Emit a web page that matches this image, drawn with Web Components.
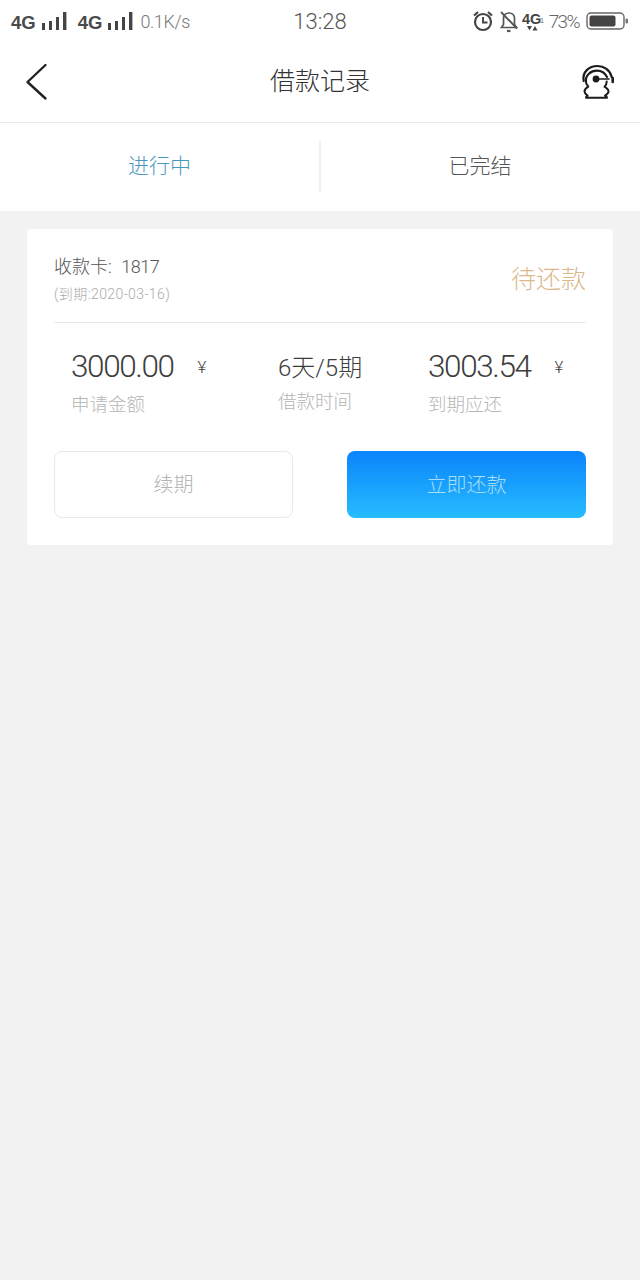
<!DOCTYPE html>
<html lang="zh">
<head>
<meta charset="utf-8">
<title>借款记录</title>
<style>
  html, body { margin: 0; height: 100%; }
  body {
    background: #f2f2f2;
    font-family: Roboto, "Noto Sans CJK SC", sans-serif;
    font-weight: 300;
  }
  #page { display: block; width: 640px; height: 1280px; overflow: hidden; }
</style>
</head>
<body>
<loan-page id="page">
  <status-bar></status-bar>
  <nav-bar title="借款记录"></nav-bar>
  <tab-bar></tab-bar>
  <loan-card card="1817" due="2020-03-16" state="待还款"></loan-card>
</loan-page>

<script>
class LoanPage extends HTMLElement {
  constructor() {
    super();
    this.attachShadow({ mode: "open" });
    this.shadowRoot.innerHTML = `
      <style>
        :host { display: flex; flex-direction: column; background: #f2f2f2; }
      </style>
      <slot></slot>
    `;
  }
}

class StatusBar extends HTMLElement {
  constructor() {
    super();
    this.attachShadow({ mode: "open" });
    const signal = `
      <svg width="26" height="18" viewBox="0 0 26 18">
        <rect x="1" y="11" width="3" height="7" fill="#444"/>
        <rect x="8" y="9" width="3" height="9" fill="#444"/>
        <rect x="15" y="5" width="3" height="13" fill="#444"/>
        <rect x="22" y="0" width="3.4" height="18" fill="#444"/>
      </svg>`;
    this.shadowRoot.innerHTML = `
      <style>
        :host {
          display: grid;
          grid-template-columns: 1fr auto 1fr;
          align-items: center;
          height: 42px;
          background: #fff;
          color: #555;
          font-family: Roboto, sans-serif;
          font-weight: 300;
        }
        .left, .right { display: flex; align-items: center; }
        .left { padding-left: 11px; }
        .right { justify-content: flex-end; padding-right: 11px; }
        .net { font: 700 18.5px "Liberation Sans", sans-serif; color: #4a4a4a; margin-right: 5px; padding-top: 3px; }
        .group { display: flex; align-items: center; margin-right: 11px; }
        .group:nth-child(2) { margin-right: 7px; }
        .speed { font-size: 18px; color: #777; letter-spacing: -0.4px; }
        .time { font-size: 22px; color: #555; }
        .pct { font-size: 19px; color: #666; margin: 0 7px 0 5px; letter-spacing: -1.6px; }
        svg { display: block; }
        .alarm { margin-right: 6px; }
        .bell { margin-right: 3px; }
      </style>
      <div class="left">
        <div class="group"><span class="net">4G</span>${signal}</div>
        <div class="group"><span class="net">4G</span>${signal}</div>
        <span class="speed">0.1K/s</span>
      </div>
      <span class="time">13:28</span>
      <div class="right">
        <svg class="alarm" width="20" height="24" viewBox="0 0 20 24" fill="none" stroke="#444">
          <circle cx="10" cy="13" r="8" stroke-width="2.2"/>
          <path d="M10 8V13.500H14.500" stroke-width="1.900"/>
          <path d="M1 6.500L5 3M19 6.500L15 3" stroke-width="2.200"/>
        </svg>
        <svg class="bell" width="20" height="24" viewBox="0 0 20 24" fill="none" stroke="#555" stroke-width="1.700">
          <path d="M2.500 18.500H17.500L15.500 15.500V9.500C15.500 6 13 4 10 4C7 4 4.500 6 4.500 9.500V15.500Z"/>
          <path d="M2 3L18 19.500" stroke-width="1.900"/>
          <path d="M8 22H11.500" stroke-width="2.200"/>
        </svg>
        <svg width="22" height="24" viewBox="0 0 22 24">
          <text x="0" y="15" font-family="Liberation Sans, sans-serif" font-weight="700" font-size="14.500" fill="#444">4G</text>
          <text x="18" y="14" font-family="Liberation Sans, sans-serif" font-size="7" fill="#666">1</text>
          <path d="M5 17H10L7.500 21.500Z" fill="#444"/>
          <path d="M10.500 21.500H15.500L13 17Z" fill="#444"/>
        </svg>
        <span class="pct">73%</span>
        <svg width="43" height="18" viewBox="0 0 43 18">
          <rect x="1" y="1" width="37" height="16" rx="4" fill="none" stroke="#666" stroke-width="1.400"/>
          <rect x="3.500" y="3.500" width="26" height="11" rx="2" fill="#444"/>
          <rect x="39.500" y="6.500" width="2.500" height="5" rx="1" fill="#777"/>
        </svg>
      </div>
    `;
  }
}

class NavBar extends HTMLElement {
  constructor() {
    super();
    this.attachShadow({ mode: "open" });
    this.shadowRoot.innerHTML = `
      <style>
        :host {
          display: grid;
          grid-template-columns: 1fr auto 1fr;
          align-items: center;
          height: 80px;
          background: #fff;
          border-bottom: 1px solid #e9e9e9;
        }
        .title { font-size: 25px; color: #333; font-family: "Noto Sans CJK SC", sans-serif; font-weight: 300; padding-bottom: 6px; }
        .back { padding-left: 25px; }
        .help { justify-self: end; padding-right: 26px; }
        svg { display: block; }
      </style>
      <div class="back">
        <svg width="24" height="38" viewBox="0 0 24 38" fill="none" stroke="#222" stroke-width="2.400" stroke-linecap="round" stroke-linejoin="round">
          <path d="M20.500 2L2.500 19L20.500 35.500"/>
        </svg>
      </div>
      <span class="title">${this.getAttribute("title")}</span>
      <div class="help">
        <svg width="34" height="36" viewBox="0 0 34 36" fill="none" stroke="#1c1c1c" stroke-linejoin="round" stroke-linecap="round">
          <path d="M3.700 17C2 8 9 2 17.500 2C24 2 30 6 31.700 13" stroke-width="2.200"/>
          <path d="M6 18C5 11 11 6.700 17 6.700C21 6.700 25 9 27 13" stroke-width="2.200"/>
          <circle cx="16" cy="15" r="3.400" fill="#1c1c1c" stroke="none"/>
          <path d="M16 15H29" stroke-width="1.600"/>
          <path d="M32.700 14V18" stroke-width="2.600"/>
          <path d="M6 18C6 20 7.500 21.500 8.300 22.700C6 24 4.500 25.500 4.500 27.500C4.500 29.500 6 30.500 7.700 31.700C6.500 32.200 6 33 6 33.700H27C27 33 26 32.200 25 31.700C27 30.500 28.500 29.500 28.500 27.500C28.500 25.500 26.500 24 24.500 22.700C26 21.500 26.700 20 26.700 17.500" stroke-width="2"/>
        </svg>
      </div>
    `;
  }
}

class TabBar extends HTMLElement {
  constructor() {
    super();
    this.attachShadow({ mode: "open" });
    this.shadowRoot.innerHTML = `
      <style>
        :host {
          display: grid;
          grid-template-columns: 1fr 1fr;
          align-items: center;
          height: 88px;
          background: #fff;
          font-family: "Noto Sans CJK SC", sans-serif;
          font-weight: 300;
          font-size: 21px;
          text-align: center;
          margin-bottom: 18px;
        }
        div { line-height: 46px; padding-bottom: 6px; color: #555; }
        .active { color: #4a97bd; border-right: 2px solid #f1f1f1; margin-right: -1px; }
      </style>
      <div class="active">进行中</div>
      <div>已完结</div>
    `;
  }
}

class LoanStat extends HTMLElement {
  constructor() {
    super();
    this.attachShadow({ mode: "open" });
    const unit = this.getAttribute("unit");
    this.shadowRoot.innerHTML = `
      <style>
        :host { display: flex; flex-direction: column; align-items: flex-start; }
        .top { display: flex; align-items: center; height: 38px; box-sizing: border-box; padding-bottom: var(--value-lift, 0); color: #3d3d3d; }
        .value { font-size: var(--value-size, 31.5px); letter-spacing: var(--value-spacing, -1.4px); }
        .unit { font-size: 17px; margin-left: 24px; margin-top: 1px; font-weight: 300; }
        .label { font-size: 18.5px; color: #b5b5b5; margin-top: var(--label-gap, 5px); line-height: 26px; font-family: "Noto Sans CJK SC", sans-serif; }
      </style>
      <div class="top">
        <span class="value">${this.getAttribute("value")}</span>
        ${unit ? `<span class="unit">${unit}</span>` : ""}
      </div>
      <div class="label">${this.getAttribute("label")}</div>
    `;
  }
}

class LoanCard extends HTMLElement {
  constructor() {
    super();
    this.attachShadow({ mode: "open" });
    this.shadowRoot.innerHTML = `
      <style>
        :host {
          display: block;
          margin: 0 27px;
          height: 316px;
          box-sizing: border-box;
          padding: 0 27px;
          background: #fff;
          border-radius: 4px;
          font-family: Roboto, "Noto Sans CJK SC", sans-serif;
          font-weight: 300;
        }
        .head {
          display: flex;
          justify-content: space-between;
          align-items: center;
          height: 93px;
          border-bottom: 1px solid #e8e8e8;
        }
        .info { padding-top: 8px; }
        .card { font-size: 18px; color: #555; line-height: 26px; }
        .card span { margin-left: 5px; letter-spacing: -0.5px; }
        .due { font-size: 14px; color: #aaa; line-height: 22px; margin-top: 3px; letter-spacing: 0.4px; }
        .state { font-size: 25px; color: #dcb98c; font-family: "Noto Sans CJK SC", sans-serif; margin-top: 2px; }
        .stats { display: flex; padding: 24px 0 0 17px; height: 104px; }
        .stats loan-stat:nth-child(1) { width: 207px; }
        .stats loan-stat:nth-child(2) { width: 150px; --value-size: 24px; --value-spacing: 0; --value-lift: 2px; --label-gap: 2px; }
        .actions { display: grid; grid-template-columns: 239px 239px; justify-content: space-between; }
        button {
          height: 67px;
          border-radius: 8px;
          font: 300 20px "Noto Sans CJK SC", sans-serif;
          padding: 0 0 2px;
        }
        .ghost { background: #fff; border: 1px solid #e9e9e9; color: #b3b3b3; }
        .primary { border: 0; color: #a9ddf5; background: linear-gradient(180deg, #0a84fb 0%, #27bcff 100%); }
      </style>
      <div class="head">
        <div class="info">
          <div class="card">收款卡: <span>${this.getAttribute("card")}</span></div>
          <div class="due">(到期:${this.getAttribute("due")})</div>
        </div>
        <div class="state">${this.getAttribute("state")}</div>
      </div>
      <div class="stats">
        <loan-stat value="3000.00" unit="¥" label="申请金额"></loan-stat>
        <loan-stat value="6天/5期" label="借款时间"></loan-stat>
        <loan-stat value="3003.54" unit="¥" label="到期应还"></loan-stat>
      </div>
      <div class="actions">
        <button class="ghost">续期</button>
        <button class="primary">立即还款</button>
      </div>
    `;
  }
}

customElements.define("loan-page", LoanPage);
customElements.define("status-bar", StatusBar);
customElements.define("nav-bar", NavBar);
customElements.define("tab-bar", TabBar);
customElements.define("loan-stat", LoanStat);
customElements.define("loan-card", LoanCard);
</script>
</body>
</html>
